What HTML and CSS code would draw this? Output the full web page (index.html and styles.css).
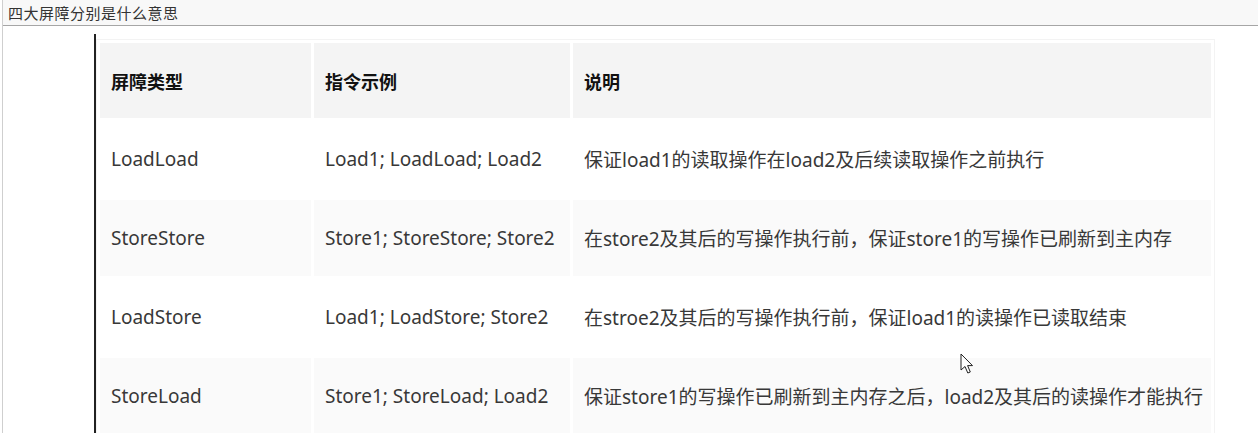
FILE: index.html
```html
<!DOCTYPE html>
<html lang="zh-CN">
<head>
<meta charset="utf-8">
<title>四大屏障分别是什么意思</title>
<link rel="stylesheet" href="styles.css">
</head>
<body>
<div class="frame">
  <div class="titlebar">四大屏障分别是什么意思</div>
  <div class="page">
    <div class="doc">
      <table class="barriers">
        <colgroup>
          <col class="c1"><col class="c2"><col class="c3">
        </colgroup>
        <thead>
          <tr><th>屏障类型</th><th>指令示例</th><th>说明</th></tr>
        </thead>
        <tbody>
          <tr><td>LoadLoad</td><td>Load1; LoadLoad; Load2</td><td>保证load1的读取操作在load2及后续读取操作之前执行</td></tr>
          <tr class="alt"><td>StoreStore</td><td>Store1; StoreStore; Store2</td><td>在store2及其后的写操作执行前，保证store1的写操作已刷新到主内存</td></tr>
          <tr><td>LoadStore</td><td>Load1; LoadStore; Store2</td><td>在stroe2及其后的写操作执行前，保证load1的读操作已读取结束</td></tr>
          <tr class="alt"><td>StoreLoad</td><td>Store1; StoreLoad; Load2</td><td>保证store1的写操作已刷新到主内存之后，load2及其后的读操作才能执行</td></tr>
        </tbody>
      </table>
    </div>
  </div>
</div>
<svg class="cursor" width="14" height="22" viewBox="0 0 14 22">
  <path d="M1 1 L1 17 L5 13.5 L7.8 20 L10.3 19 L7.6 12.6 L12.5 12.6 Z" fill="#fff" stroke="#222" stroke-width="1" stroke-linejoin="round"/>
</svg>
</body>
</html>
```
FILE: styles.css
```css
html, body {
  margin: 0;
  padding: 0;
  background: #fff;
}
body {
  width: 1258px;
  height: 433px;
  overflow: hidden;
  position: relative;
}
.frame {
  margin-left: 2px;
  border-left: 1px solid #cfcfcf;
  height: 433px;
}
.titlebar {
  height: 26px;
  box-sizing: border-box;
  border-bottom: 1px solid #a6a6a6;
  background: #f8f8f8;
  padding-left: 5px;
  font-family: "Noto Sans CJK SC", sans-serif;
  font-size: 15px;
  line-height: 26px;
  color: #333;
  letter-spacing: 0.5px;
}
.page {
  padding-top: 8px;
}
.doc {
  margin-left: 91px;
  border-left: 2px solid #222;
  padding-top: 5px;
  height: 400px;
}
.barriers {
  table-layout: fixed;
  width: 1119px;
  border: 1px solid #f3f3f3;
  border-spacing: 3px;
  font-family: "Noto Sans", "Noto Sans CJK SC", sans-serif;
  font-size: 19px;
  color: #383838;
}
.c1 { width: 211px; }
.c2 { width: 256px; }
.c3 { width: 638px; }
.barriers th,
.barriers td {
  text-align: left;
  vertical-align: middle;
  padding: 0 0 0 11px;
  white-space: nowrap;
}
.barriers th {
  height: 75px;
  background: #f4f4f4;
  font-weight: bold;
  font-size: 18px;
  color: #111;
  font-family: "Noto Sans CJK SC", sans-serif;
}
.barriers td {
  height: 76px;
}
.barriers tr.alt td {
  background: #fafafa;
}
.cursor {
  position: absolute;
  left: 960px;
  top: 353px;
}
```
